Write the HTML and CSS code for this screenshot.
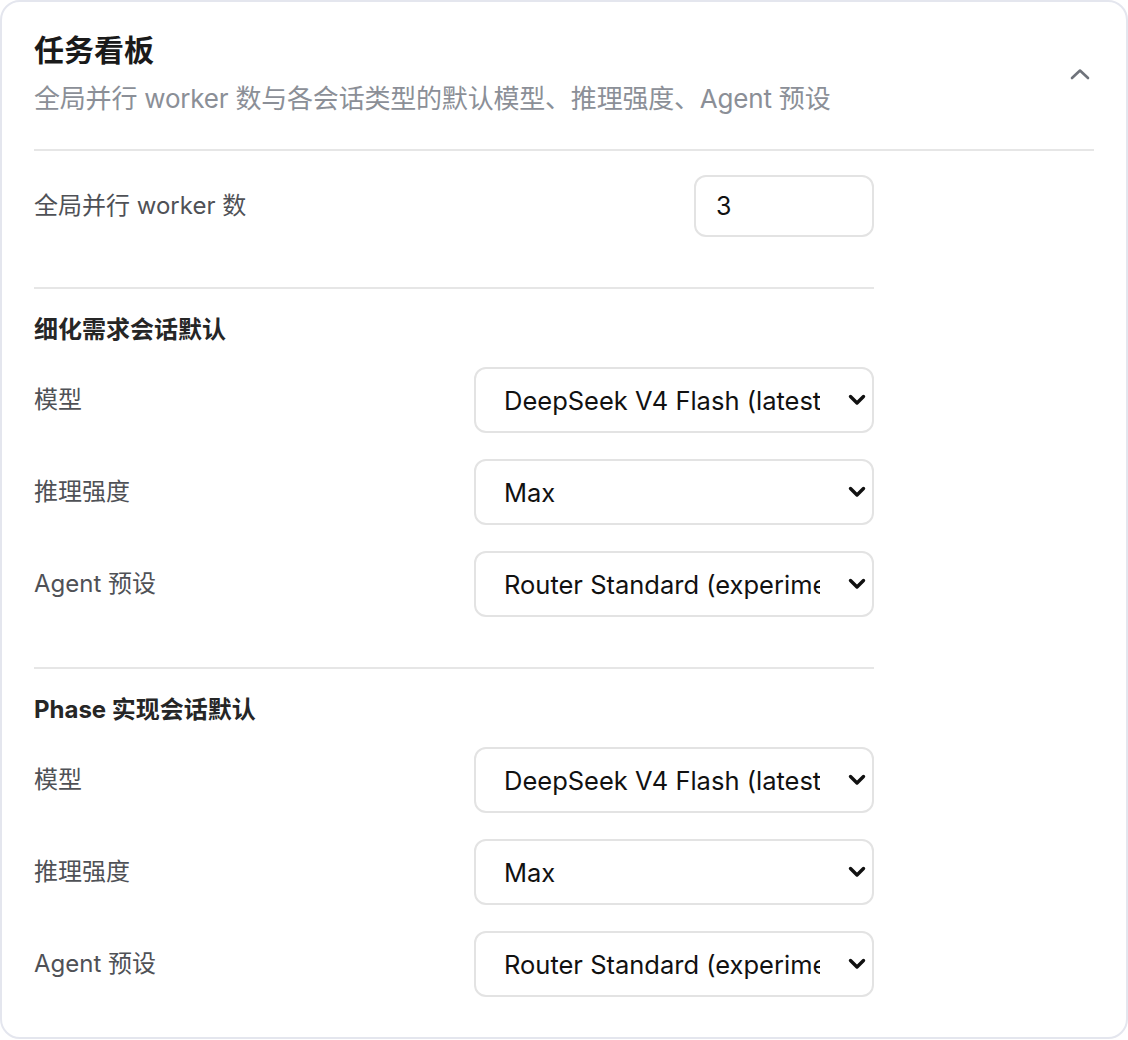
FILE: index.html
```html
<!DOCTYPE html>
<html lang="zh-CN">
<head>
<meta charset="utf-8">
<title>任务看板</title>
<link rel="stylesheet" href="styles.css">
</head>
<body>
<div class="card">
  <div class="card-header">
    <div class="heading">
      <div class="title">任务看板</div>
      <div class="subtitle">全局并行 worker 数与各会话类型的默认模型、推理强度、Agent 预设</div>
    </div>
    <svg class="collapse" width="20" height="12" viewBox="0 0 20 12"><path d="M2 10 L10 2.5 L18 10" fill="none" stroke="#6f737b" stroke-width="2.6" stroke-linecap="round" stroke-linejoin="round"/></svg>
  </div>
  <div class="body">
    <div class="row first">
      <label class="label">全局并行 worker 数</label>
      <input class="num" type="text" value="3">
    </div>

    <div class="section">
      <div class="section-title">细化需求会话默认</div>
      <div class="row">
        <label class="label">模型</label>
        <div class="select-wrap">
          <select class="select"><option>DeepSeek V4 Flash (latest)</option></select>
          <svg class="arrow" width="18" height="12" viewBox="0 0 18 12"><path d="M2.5 2.5 L9 9 L15.5 2.5" fill="none" stroke="#111" stroke-width="3.4" stroke-linecap="round" stroke-linejoin="round"/></svg>
        </div>
      </div>
      <div class="row">
        <label class="label">推理强度</label>
        <div class="select-wrap">
          <select class="select"><option>Max</option></select>
          <svg class="arrow" width="18" height="12" viewBox="0 0 18 12"><path d="M2.5 2.5 L9 9 L15.5 2.5" fill="none" stroke="#111" stroke-width="3.4" stroke-linecap="round" stroke-linejoin="round"/></svg>
        </div>
      </div>
      <div class="row">
        <label class="label">Agent 预设</label>
        <div class="select-wrap">
          <select class="select"><option>Router Standard (experimental)</option></select>
          <svg class="arrow" width="18" height="12" viewBox="0 0 18 12"><path d="M2.5 2.5 L9 9 L15.5 2.5" fill="none" stroke="#111" stroke-width="3.4" stroke-linecap="round" stroke-linejoin="round"/></svg>
        </div>
      </div>
    </div>

    <div class="section">
      <div class="section-title">Phase 实现会话默认</div>
      <div class="row">
        <label class="label">模型</label>
        <div class="select-wrap">
          <select class="select"><option>DeepSeek V4 Flash (latest)</option></select>
          <svg class="arrow" width="18" height="12" viewBox="0 0 18 12"><path d="M2.5 2.5 L9 9 L15.5 2.5" fill="none" stroke="#111" stroke-width="3.4" stroke-linecap="round" stroke-linejoin="round"/></svg>
        </div>
      </div>
      <div class="row">
        <label class="label">推理强度</label>
        <div class="select-wrap">
          <select class="select"><option>Max</option></select>
          <svg class="arrow" width="18" height="12" viewBox="0 0 18 12"><path d="M2.5 2.5 L9 9 L15.5 2.5" fill="none" stroke="#111" stroke-width="3.4" stroke-linecap="round" stroke-linejoin="round"/></svg>
        </div>
      </div>
      <div class="row">
        <label class="label">Agent 预设</label>
        <div class="select-wrap">
          <select class="select"><option>Router Standard (experimental)</option></select>
          <svg class="arrow" width="18" height="12" viewBox="0 0 18 12"><path d="M2.5 2.5 L9 9 L15.5 2.5" fill="none" stroke="#111" stroke-width="3.4" stroke-linecap="round" stroke-linejoin="round"/></svg>
        </div>
      </div>
    </div>
  </div>
</div>
</body>
</html>
```
FILE: styles.css
```css
* { box-sizing: border-box; }
html, body { margin: 0; padding: 0; background: #ffffff; }
body {
  font-family: "Inter", "Noto Sans CJK SC", sans-serif;
  color: #1a1a1a;
}
.card {
  width: 1128px;
  border: 2px solid #e4e6ee;
  border-radius: 20px;
  padding: 28px 32px 40px;
  background: #fff;
}
.card-header {
  display: flex;
  justify-content: space-between;
  align-items: center;
  padding-bottom: 32px;
  border-bottom: 2px solid #e6e6e6;
}
.title {
  font-size: 30px;
  line-height: 40px;
  font-weight: 700;
  color: #1a1a1a;
}
.subtitle {
  margin-top: 11px;
  font-size: 26px;
  line-height: 36px;
  letter-spacing: -0.2px;
  color: #8b8f97;
}
.collapse { margin-right: 4px; }
.body {
  width: 840px;
  padding-top: 24px;
}
.row {
  display: flex;
  justify-content: space-between;
  align-items: center;
  margin-top: 26px;
}
.row.first { margin-top: 0; padding-bottom: 50px; }
.label {
  font-size: 24px;
  line-height: 32px;
  color: #4f5156;
}
.num {
  width: 180px;
  height: 62px;
  border: 2px solid #e3e3e3;
  border-radius: 12px;
  padding: 0 20px;
  font-family: inherit;
  font-size: 25px;
  color: #111;
  outline: none;
  background: #fff;
}
.section {
  border-top: 2px solid #e6e6e6;
  padding-top: 25px;
  padding-bottom: 50px;
}
.section:last-child { padding-bottom: 0; }
.section-title {
  font-size: 24px;
  line-height: 32px;
  font-weight: 700;
  color: #262626;
  margin-bottom: -5px;
}
.select-wrap {
  position: relative;
  width: 400px;
  height: 66px;
}
.select {
  appearance: none;
  -webkit-appearance: none;
  width: 100%;
  height: 100%;
  border: 2px solid #e3e3e3;
  border-radius: 12px;
  padding: 0 52px 0 28px;
  font-family: inherit;
  font-size: 25.5px;
  color: #111;
  background: #fff;
  outline: none;
}
.arrow {
  position: absolute;
  right: 8px;
  top: 27px;
  pointer-events: none;
}
```
